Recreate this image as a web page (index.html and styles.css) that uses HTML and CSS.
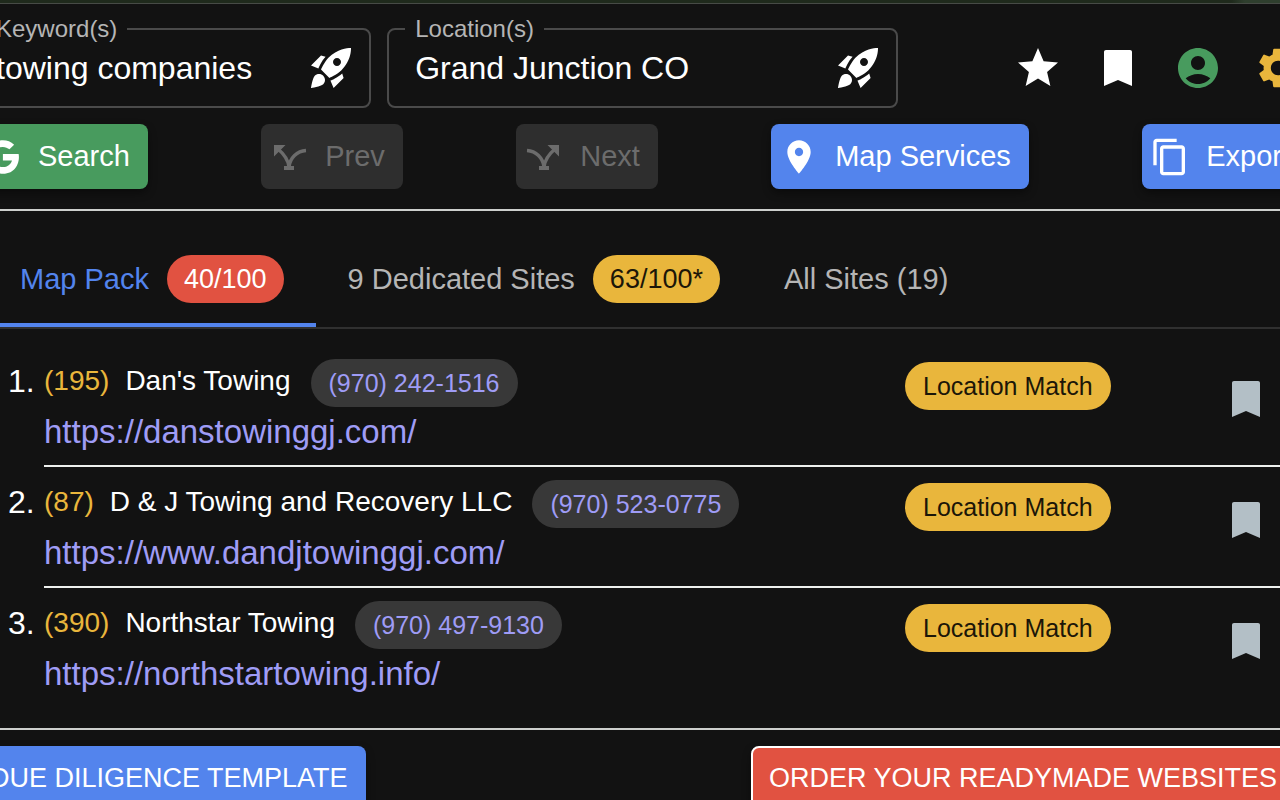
FILE: index.html
```
<!DOCTYPE html>
<html lang="en">
  <head>
    <meta charset="utf-8" />
    <title>Map Pack Results</title>
    <link rel="stylesheet" href="styles.css">
  </head>
  <body>
    <svg class="sprite" aria-hidden="true">
      <symbol id="rocket" viewBox="0 0 24 24">
        <path d="M6 15c-.83 0-1.58.34-2.12.88C2.7 17.06 2 22 2 22s4.94-.7 6.12-1.88C8.66 19.58 9 18.83 9 18c0-1.66-1.34-3-3-3z" />
        <path d="M9.3 6.4C7.2 8.6 5.8 11.9 5.7 12.3L2 10.7l5-5zM17.6 14.7c-2.3 2.1-5.5 3.5-5.9 3.6L13.3 22l5-5z" />
        <path fill-rule="evenodd" d="M11.2 17S14.9 15.4 17.1 13.3C22.5 7.9 22 2 22 2s-5.9-.5-11.3 4.9C8.6 9.1 7 12.8 7 12.8zM15 11c-1.1 0-2-.9-2-2s.9-2 2-2 2 .9 2 2-.9 2-2 2z" />
      </symbol>
      <symbol id="bookmark" viewBox="0 0 24 24">
        <path d="M18 3H6c-.6 0-1 .4-1 1v17l7-3 7 3V4c0-.6-.4-1-1-1z" />
      </symbol>
      <symbol id="split" viewBox="0 0 40 40">
        <path d="M5 8h11.5L5 19.5zM15 29h10v4H15z" />
        <path d="M9 12c6 5 10 10 11 18M37 13.5C28 14 21 21 20 30" fill="none" stroke="currentColor" stroke-width="3.4" />
      </symbol>
    </svg>

    <div class="page">
      <div class="topStrip"></div>

      <form class="searchRow">
        <fieldset class="field keyword">
          <legend><label for="keywords">Keyword(s)</label></legend>
          <div class="fieldInner">
            <input type="text" id="keywords" value="towing companies" />
            <button type="button" class="iconButton" aria-label="Keyword ideas">
              <svg class="icon"><use href="#rocket" /></svg>
            </button>
          </div>
        </fieldset>
        <fieldset class="field location">
          <legend><label for="locations">Location(s)</label></legend>
          <div class="fieldInner">
            <input type="text" id="locations" value="Grand Junction CO" />
            <button type="button" class="iconButton" aria-label="Location ideas">
              <svg class="icon"><use href="#rocket" /></svg>
            </button>
          </div>
        </fieldset>
        <div class="userIcons">
          <button type="button" class="iconButton" aria-label="Favorites">
            <svg class="icon" viewBox="0 0 24 24"><path d="M12 17.27L18.18 21l-1.64-7.03L22 9.24l-7.19-.61L12 2 9.19 8.63 2 9.24l5.46 4.73L5.82 21z" /></svg>
          </button>
          <button type="button" class="iconButton" aria-label="Bookmarks">
            <svg class="icon"><use href="#bookmark" /></svg>
          </button>
          <button type="button" class="iconButton green" aria-label="Account">
            <svg class="icon" viewBox="0 0 24 24"><path fill-rule="evenodd" d="M12 2C6.48 2 2 6.48 2 12s4.48 10 10 10 10-4.48 10-10S17.52 2 12 2zm0 4c1.93 0 3.5 1.57 3.5 3.5S13.93 13 12 13s-3.5-1.57-3.5-3.5S10.07 6 12 6zm0 14c-2.03 0-4.43-.82-6.14-2.88C7.55 15.8 9.68 15 12 15s4.45.8 6.14 2.12C16.43 19.18 14.03 20 12 20z" /></svg>
          </button>
          <button type="button" class="iconButton yellow" aria-label="Settings">
            <svg class="icon" viewBox="0 0 24 24"><path d="M19.14 12.94c.04-.3.06-.61.06-.94 0-.32-.02-.64-.07-.94l2.03-1.58c.18-.14.23-.41.12-.61l-1.92-3.32c-.12-.22-.37-.29-.59-.22l-2.39.96c-.5-.38-1.03-.7-1.62-.94l-.36-2.54c-.04-.24-.24-.41-.48-.41h-3.84c-.24 0-.43.17-.47.41l-.36 2.54c-.59.24-1.13.57-1.62.94l-2.39-.96c-.22-.08-.47 0-.59.22L2.74 8.87c-.12.21-.08.47.12.61l2.03 1.58c-.05.3-.09.63-.09.94s.02.64.07.94l-2.03 1.58c-.18.14-.23.41-.12.61l1.92 3.32c.12.22.37.29.59.22l2.39-.96c.5.38 1.03.7 1.62.94l.36 2.54c.05.24.24.41.48.41h3.84c.24 0 .44-.17.47-.41l.36-2.54c.59-.24 1.13-.56 1.62-.94l2.39.96c.22.08.47 0 .59-.22l1.92-3.32c.12-.22.07-.47-.12-.61zM12 15.6c-1.98 0-3.6-1.62-3.6-3.6s1.62-3.6 3.6-3.6 3.6 1.62 3.6 3.6-1.62 3.6-3.6 3.6z" /></svg>
          </button>
        </div>
      </form>

      <div class="toolbar">
        <button type="button" class="button greenButton">
          <svg viewBox="0 0 24 24"><path d="M12.545 10.239v3.821h5.445c-.712 2.315-2.647 3.972-5.445 3.972a6.033 6.033 0 1 1 0-12.064c1.498 0 2.866.549 3.921 1.453l2.814-2.814A9.969 9.969 0 0 0 12.545 2C7.021 2 2.543 6.477 2.543 12s4.478 10 10.002 10c8.396 0 10.249-7.85 9.426-11.748z" /></svg>
          Search
        </button>
        <button type="button" class="button" disabled>
          <svg><use href="#split" /></svg>
          Prev
        </button>
        <button type="button" class="button" disabled>
          <svg class="flip"><use href="#split" /></svg>
          Next
        </button>
        <button type="button" class="button blueButton">
          <svg viewBox="0 0 24 24"><path d="M12 2C8.13 2 5 5.13 5 9c0 5.25 7 13 7 13s7-7.75 7-13c0-3.87-3.13-7-7-7zm0 9.5c-1.38 0-2.5-1.12-2.5-2.5s1.12-2.5 2.5-2.5 2.5 1.12 2.5 2.5-1.12 2.5-2.5 2.5z" /></svg>
          Map Services
        </button>
        <button type="button" class="button blueButton">
          <svg viewBox="0 0 24 24"><path d="M16 1H4c-1.1 0-2 .9-2 2v14h2V3h12V1zm3 4H8c-1.1 0-2 .9-2 2v14c0 1.1.9 2 2 2h11c1.1 0 2-.9 2-2V7c0-1.1-.9-2-2-2zm0 16H8V7h11v14z" /></svg>
          Export
        </button>
      </div>

      <div class="tabs" role="tablist">
        <button type="button" class="tab active" role="tab" aria-selected="true">
          Map Pack <span class="chip score red">40/100</span>
        </button>
        <button type="button" class="tab" role="tab" aria-selected="false">
          9 Dedicated Sites <span class="chip score amber">63/100*</span>
        </button>
        <button type="button" class="tab" role="tab" aria-selected="false">All Sites (19)</button>
      </div>

      <ol class="results">
        <li class="result">
          <span class="rank">1.</span>
          <div class="resultBody">
            <div class="details">
              <div class="heading">
                <span class="reviews">(195)</span>
                <span class="name">Dan's Towing</span>
                <a class="chip phone" href="tel:9702421516">(970) 242-1516</a>
              </div>
              <a class="url" href="https://danstowinggj.com/">https://danstowinggj.com/</a>
            </div>
            <span class="chip amber match">Location Match</span>
            <button type="button" class="iconButton save" aria-label="Bookmark Dan's Towing">
              <svg class="icon"><use href="#bookmark" /></svg>
            </button>
          </div>
        </li>
        <li class="result">
          <span class="rank">2.</span>
          <div class="resultBody">
            <div class="details">
              <div class="heading">
                <span class="reviews">(87)</span>
                <span class="name">D &amp; J Towing and Recovery LLC</span>
                <a class="chip phone" href="tel:9705230775">(970) 523-0775</a>
              </div>
              <a class="url" href="https://www.dandjtowinggj.com/">https://www.dandjtowinggj.com/</a>
            </div>
            <span class="chip amber match">Location Match</span>
            <button type="button" class="iconButton save" aria-label="Bookmark D &amp; J Towing and Recovery LLC">
              <svg class="icon"><use href="#bookmark" /></svg>
            </button>
          </div>
        </li>
        <li class="result">
          <span class="rank">3.</span>
          <div class="resultBody">
            <div class="details">
              <div class="heading">
                <span class="reviews">(390)</span>
                <span class="name">Northstar Towing</span>
                <a class="chip phone" href="tel:9704979130">(970) 497-9130</a>
              </div>
              <a class="url" href="https://northstartowing.info/">https://northstartowing.info/</a>
            </div>
            <span class="chip amber match">Location Match</span>
            <button type="button" class="iconButton save" aria-label="Bookmark Northstar Towing">
              <svg class="icon"><use href="#bookmark" /></svg>
            </button>
          </div>
        </li>
      </ol>

      <div class="footer">
        <button type="button" class="button footerButton blueButton">DUE DILIGENCE TEMPLATE</button>
        <button type="button" class="button footerButton redButton">ORDER YOUR READYMADE WEBSITES</button>
      </div>
    </div>
  </body>
</html>
```
FILE: styles.css
```
* {
  box-sizing: border-box;
}

body {
  margin: 0;
  overflow: hidden;
  background-color: #121212;
  color: white;
  font-family: "Liberation Sans", Arial, sans-serif;
}

button,
input {
  font-family: inherit;
}

.sprite {
  display: none;
}

/* The panel runs past both sides of the window */
.page {
  margin: 0 -32px;
}

.topStrip {
  height: 4px;
  background: linear-gradient(to right, #1f2a1c 94%, #2f3f2e 95%);
  border-bottom: 1px solid #474b46;
}

/* Search fields */
.searchRow {
  display: flex;
  gap: 16px;
  padding: 11px 0 16px;
}

.field {
  min-width: 0;
  margin: 0;
  padding: 0 14px 13px 16px;
  border: 2px solid #4a4a4a;
  border-radius: 8px;
}

.keyword {
  flex: 0 0 30%;
}

.location {
  flex: 0 0 38%;
}

.field legend {
  padding: 0 10px;
  color: #b5b5b5;
  font-size: 24px;
  line-height: 28px;
}

.fieldInner {
  display: flex;
  align-items: center;
  height: 50px;
}

.fieldInner input {
  flex: 1;
  min-width: 0;
  padding: 0 10px;
  border: none;
  outline: none;
  background: none;
  color: white;
  font-size: 32px;
}

.iconButton {
  display: flex;
  padding: 0;
  border: none;
  background: none;
  color: white;
  cursor: pointer;
}

.icon {
  width: 48px;
  height: 48px;
  fill: currentColor;
}

.green {
  color: #489b5e;
}

.yellow {
  color: #e9b63c;
}

.userIcons {
  display: flex;
  align-items: center;
  gap: 32px;
  margin-left: auto;
  padding: 12px 10px 0 0;
}

/* Buttons */
.toolbar {
  display: flex;
  justify-content: space-between;
  padding: 0 4px 20px 6px;
  border-bottom: 2px solid #cdcfcd;
}

.button {
  display: flex;
  align-items: center;
  gap: 16px;
  min-height: 65px;
  padding: 0 18px 0 8px;
  border: none;
  border-radius: 8px;
  color: white;
  font-size: 29px;
  white-space: nowrap;
  cursor: pointer;
  box-shadow: 0 4px 8px rgba(0, 0, 0, 0.4);
}

.button svg {
  width: 40px;
  height: 40px;
  fill: currentColor;
}

.button .flip {
  transform: scaleX(-1);
}

.button:disabled {
  background-color: #2e2e2e;
  color: #6c6c6c;
  box-shadow: none;
  cursor: default;
}

.greenButton {
  background-color: #489b5e;
}

.blueButton {
  background-color: #5384ed;
}

.redButton {
  border: 2px solid white;
  background-color: #e15241;
}

/* Tabs */
.tabs {
  display: flex;
  margin-top: 20px;
  padding-left: 20px;
  border-bottom: 2px solid #303030;
}

.tab {
  display: flex;
  align-items: center;
  gap: 18px;
  height: 96px;
  padding: 4px 32px 0;
  border: none;
  border-bottom: 4px solid transparent;
  background: none;
  color: #b5b5b5;
  font-size: 29px;
  cursor: pointer;
}

.tab.active {
  border-bottom-color: #5384ed;
  color: #5384ed;
}

.chip {
  padding: 0 18px;
  border-radius: 24px;
  font-size: 25px;
  line-height: 48px;
}

.score {
  padding: 0 17px;
  font-size: 27px;
}

.red {
  background-color: #e15241;
  color: white;
}

.amber {
  background-color: #e9b63c;
  color: #1c1608;
}

.phone {
  margin-left: 4px;
  background-color: #383838;
  color: #9f9cf6;
  text-decoration: none;
}

/* Results list */
.results {
  margin: 17px 0 0;
  padding: 0 0 19px 40px;
  border-bottom: 2px solid #cdcfcd;
  list-style: none;
}

.result {
  display: flex;
}

.rank {
  width: 36px;
  padding-top: 13px;
  font-size: 32px;
  line-height: 44px;
}

.resultBody {
  flex: 1;
  display: grid;
  grid-template-columns: 1fr 317px 48px;
  align-items: start;
  padding-right: 42px;
  border-bottom: 2px solid #eef0ee;
}

.result:last-child .resultBody {
  border-bottom-color: transparent;
}

.details {
  padding: 13px 0 8px;
}

.heading {
  display: flex;
  gap: 16px;
  font-size: 28px;
  line-height: 44px;
}

.reviews {
  color: #e9b63c;
}

.url {
  display: block;
  color: #9f9cf6;
  font-size: 33px;
  line-height: 50px;
  text-decoration: none;
}

.match {
  justify-self: start;
  margin-top: 16px;
}

.save {
  margin-top: 29px;
  color: #b3bfc6;
}

/* Bottom buttons */
.footer {
  display: flex;
  justify-content: space-between;
  padding: 16px 15px 16px 6px;
}

.footerButton {
  padding: 0 18px 0 16px;
  font-size: 27px;
}
```
